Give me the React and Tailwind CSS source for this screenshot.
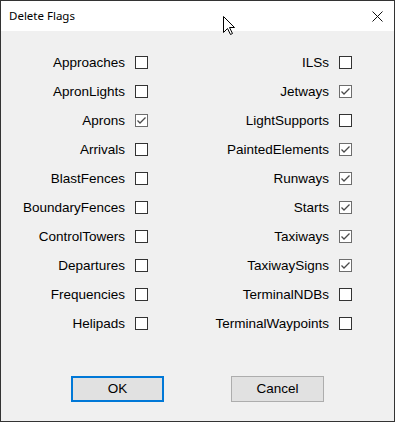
import React from 'react';

const LEFT = [
  ['Approaches', false],
  ['ApronLights', false],
  ['Aprons', true],
  ['Arrivals', false],
  ['BlastFences', false],
  ['BoundaryFences', false],
  ['ControlTowers', false],
  ['Departures', false],
  ['Frequencies', false],
  ['Helipads', false],
];

const RIGHT = [
  ['ILSs', false],
  ['Jetways', true],
  ['LightSupports', false],
  ['PaintedElements', true],
  ['Runways', true],
  ['Starts', true],
  ['Taxiways', true],
  ['TaxiwaySigns', true],
  ['TerminalNDBs', false],
  ['TerminalWaypoints', false],
];

const Box = ({ checked }) => (
  <span className={`w-[13px] h-[13px] flex items-center justify-center bg-white border ${checked ? 'border-[#6d6d6d]' : 'border-[#333333]'}`}>
    {checked && (
      <svg width="11" height="11" viewBox="0 0 11 11">
        <path d="M1.5 5.5 L4 8 L9.5 2.5" fill="none" stroke="#4a4a4a" strokeWidth="1.3" />
      </svg>
    )}
  </span>
);

const Row = ({ label, checked }) => (
  <div className="h-[29px] flex items-center justify-end gap-[10px]">
    <span className="text-[13.5px] leading-none text-black">{label}</span>
    <Box checked={checked} />
  </div>
);

export default function App() {
  return (
    <div
      className="relative w-[395px] h-[422px] border border-[#333333] flex flex-col bg-[#f0f0f0]"
      style={{ fontFamily: '"Liberation Sans", Arial, sans-serif' }}
    >
      {/* barra de título */}
      <div className="h-[30px] bg-white flex items-center justify-between pl-[8px] pr-[11px]">
        <span className="text-[11.5px] text-black" style={{ fontFamily: '"Noto Sans", "Open Sans", sans-serif' }}>Delete Flags</span>
        <svg width="11" height="11" viewBox="0 0 11 11">
          <path d="M0.5 0.5 L10.5 10.5 M10.5 0.5 L0.5 10.5" stroke="#111" strokeWidth="1" />
        </svg>
      </div>

      <div className="flex-1 pt-[17px]">
        <div className="flex">
          <div className="w-[147px] flex flex-col">
            {LEFT.map(([l, c]) => <Row key={l} label={l} checked={c} />)}
          </div>
          <div className="w-[204px] flex flex-col">
            {RIGHT.map(([l, c]) => <Row key={l} label={l} checked={c} />)}
          </div>
        </div>

        <div className="mt-[38px] pl-[70px] flex gap-[67px]">
          <button className="w-[93px] h-[26px] bg-[#e1e1e1] border-2 border-[#0078d7] text-[13.5px] text-black">OK</button>
          <button className="w-[93px] h-[26px] bg-[#e1e1e1] border border-[#adadad] text-[13.5px] text-black">Cancel</button>
        </div>
      </div>

      {/* cursor do mouse */}
      <svg className="absolute left-[222px] top-[15px]" width="13" height="20" viewBox="0 0 13 20">
        <path d="M0.5 0.5 L0.5 16.5 L4.5 12.5 L7.5 18.5 L9.5 17.5 L6.5 11.5 L11.5 11.5 Z" fill="white" stroke="black" strokeWidth="1" />
      </svg>
    </div>
  );
}
